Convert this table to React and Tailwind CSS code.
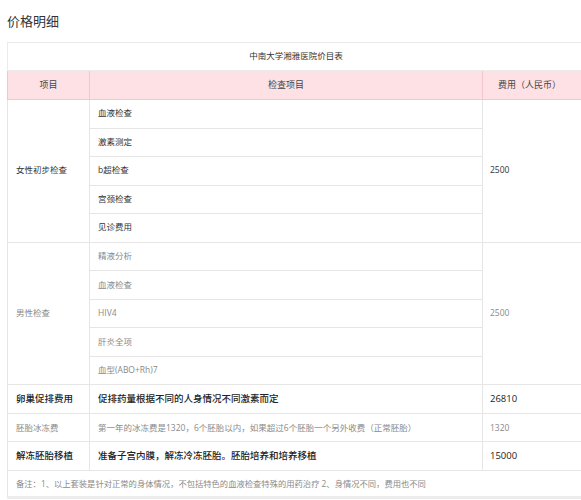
import React from 'react';

const female = ['血液检查', '激素测定', 'b超检查', '宫颈检查', '见诊费用'];
const male = ['精液分析', '血液检查', 'HIV4', '肝炎全项', '血型(ABO+Rh)7'];

const cell = 'border border-[#e6e6e6] px-[8px]';

export default function App() {
  return (
    <div
      className="w-[581px] h-[500px] overflow-hidden bg-white text-[#333]"
      style={{ fontFamily: '"Open Sans", "Noto Sans CJK SC", sans-serif' }}
    >
      <h2 className="pl-[7px] pt-[12px] h-[42px] text-[13px] leading-[18px] text-[#333]">价格明细</h2>

      <div className="pl-[7px]">
        <table className="table-fixed border-collapse w-[610px] text-[8.5px]">
          <colgroup>
            <col className="w-[82px]" />
            <col className="w-[393px]" />
            <col />
          </colgroup>
          <tbody>
            <tr className="h-[28px]">
              <td colSpan={3} className="border border-[#ebebeb] text-center text-[8.5px] text-[#333] pr-[32px]">
                中南大学湘雅医院价目表
              </td>
            </tr>
            <tr className="h-[29px] bg-[#fde1e4] text-[9px] text-[#444]">
              <td className="border border-[#f4c7cc] text-center">项目</td>
              <td className="border border-[#f4c7cc] text-center">检查项目</td>
              <td className="border border-[#f4c7cc] pl-[15px]">费用（人民币）</td>
            </tr>

            {female.map((item, i) => (
              <tr key={item} className="h-[28.5px] text-[#333]">
                {i === 0 && (
                  <td rowSpan={5} className={`${cell} pl-[8px]`}>女性初步检查</td>
                )}
                <td className={cell}>{item}</td>
                {i === 0 && (
                  <td rowSpan={5} className={`${cell} pl-[7px]`}>2500</td>
                )}
              </tr>
            ))}

            {male.map((item, i) => (
              <tr key={item + i} className="h-[28.6px] text-[#8a8a8a] text-[8.5px]">
                {i === 0 && (
                  <td rowSpan={5} className={`${cell} pl-[8px]`}>男性检查</td>
                )}
                <td className={cell}>{item}</td>
                {i === 0 && (
                  <td rowSpan={5} className={`${cell} pl-[7px]`}>2500</td>
                )}
              </tr>
            ))}

            <tr className="h-[29px] text-[9.5px] text-[#222] font-medium">
              <td className={cell}>卵巢促排费用</td>
              <td className={cell}>促排药量根据不同的人身情况不同激素而定</td>
              <td className={`${cell} pl-[7px]`}>26810</td>
            </tr>
            <tr className="h-[28px] text-[8.5px] text-[#8a8a8a]">
              <td className={cell}>胚胎冰冻费</td>
              <td className={`${cell} whitespace-nowrap`}>
                第一年的冰冻费是1320，6个胚胎以内，如果超过6个胚胎一个另外收费（正常胚胎）
              </td>
              <td className={`${cell} pl-[7px]`}>1320</td>
            </tr>
            <tr className="h-[29px] text-[9.5px] text-[#222] font-medium">
              <td className={cell}>解冻胚胎移植</td>
              <td className={cell}>准备子宫内膜，解冻冷冻胚胎。胚胎培养和培养移植</td>
              <td className={`${cell} pl-[7px]`}>15000</td>
            </tr>
            <tr className="h-[27px] text-[8.3px] text-[#8a8a8a]">
              <td colSpan={3} className={`${cell} border-b-[3px] border-b-[#ececec]`}>
                备注：1、以上套装是针对正常的身体情况，不包括特色的血液检查特殊的用药治疗 2、身情况不同，费用也不同
              </td>
            </tr>
          </tbody>
        </table>
      </div>
    </div>
  );
}
